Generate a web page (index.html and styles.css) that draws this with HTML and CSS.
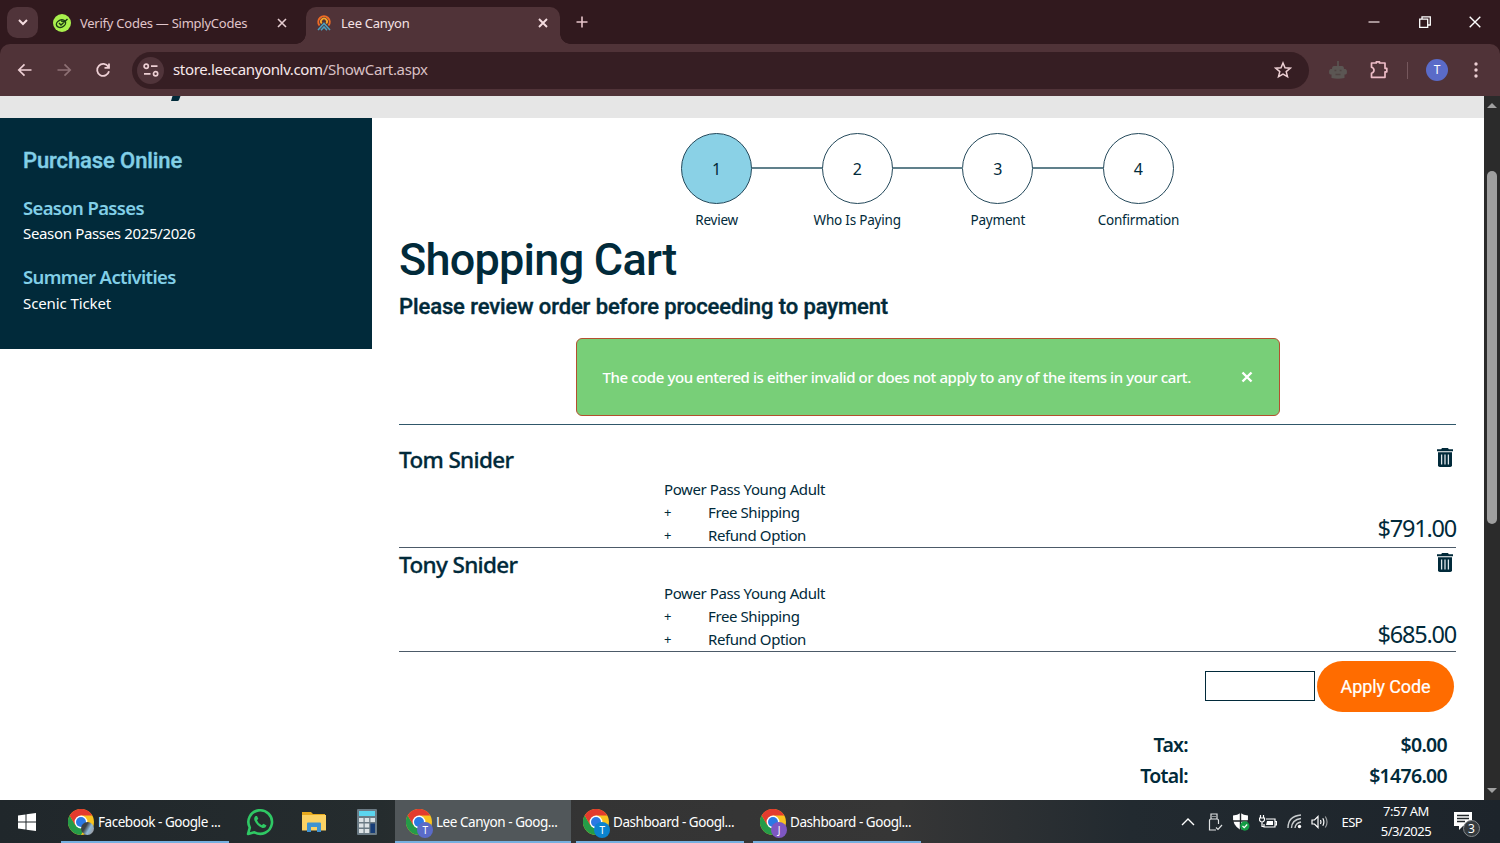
FILE: index.html
```html
<!DOCTYPE html>
<html lang="en">
<head>
<meta charset="UTF-8">
<meta name="viewport" content="width=device-width, initial-scale=1.0">
<title>Lee Canyon</title>
<link rel="stylesheet" href="styles.css">
</head>
<body>

<svg class="defs" width="0" height="0">
<symbol id="chrome" viewBox="0 0 26 26">
<circle cx="13" cy="13" r="13" fill="#f9c31f"/>
<path d="M1.7 6.5A13 13 0 0 0 13 26L18.6 16.2L13 13L7.4 16.2Z" fill="#259b48"/>
<path d="M1.7 6.5A13 13 0 0 1 24.3 6.5H13L7.4 16.2Z" fill="#e33b2e"/>
<circle cx="13" cy="13" r="6.4" fill="#fff"/>
<circle cx="13" cy="13" r="5" fill="#2b79e4"/>
</symbol>
<symbol id="trash" viewBox="0 0 16 19">
<path d="M5 0H11L11.8 1.2H16V3.2H0V1.2H4.2Z" fill="#012a3a"/>
<path d="M1 4.3H15V17.2Q15 19 13.2 19H2.8Q1 19 1 17.2Z" fill="#012a3a"/>
<path d="M4.6 6.5V16.5M8 6.5V16.5M11.4 6.5V16.5" stroke="#dfe6ea" stroke-width="1.3"/>
</symbol>
</svg>

<header class="browser">
<div class="tabs">
<div class="tab-search"><svg width="12" height="12" viewBox="0 0 12 12"><path d="M2 4L6 8L10 4" fill="none" stroke="#f5dde0" stroke-width="2"/></svg></div>
<div class="tab">
<svg width="18" height="18" viewBox="0 0 18 18"><circle cx="9" cy="9" r="9" fill="#a9f04d"/><g fill="none" stroke="#1c3d14" stroke-width="1.4"><ellipse cx="8" cy="9.6" rx="4.8" ry="3.6" transform="rotate(-25 8 9.6)"/><path d="M6 9L8 11L14.5 5M8 7L12.5 7.5"/></g></svg>
<span class="tab-name verify">Verify Codes — SimplyCodes</span>
<svg class="close" width="10" height="10" viewBox="0 0 10 10"><path d="M1 1L9 9M9 1L1 9" stroke="#e6cdd1" stroke-width="1.6"/></svg>
</div>
<div class="tab active">
<svg width="14" height="16" viewBox="0 0 14 16"><g fill="none"><path d="M2.500 10.500A5.700 5.700 0 1 1 11.500 10.500" stroke="#ee6b25" stroke-width="2"/><path d="M4.700 8.500A3 3 0 1 1 9.300 8.500" stroke="#f6a62a" stroke-width="1.800"/><path d="M1 15L7 8.500L13 15M4 15.200L7 12L10 15.200" stroke="#4b9fbd" stroke-width="1.600"/></g></svg>
<span class="tab-name">Lee Canyon</span>
<svg class="close" width="10" height="10" viewBox="0 0 10 10"><path d="M1 1L9 9M9 1L1 9" stroke="#f5dde0" stroke-width="1.9"/></svg>
</div>
<svg class="new-tab" width="12" height="12" viewBox="0 0 12 12"><path d="M6 .5V11.500M.5 6H11.500" stroke="#e6c4ca" stroke-width="1.6"/></svg>
<div class="window-buttons">
<svg width="12" height="12" viewBox="0 0 12 12"><path d="M.5 6H11.500" stroke="#f5e4e6" stroke-width="1.2"/></svg>
<svg width="12" height="12" viewBox="0 0 12 12"><path d="M.7 3.200H8.700V11.300H.7ZM3 3V.8H11.300V9H9" fill="none" stroke="#fff" stroke-width="1.3"/></svg>
<svg width="12" height="12" viewBox="0 0 12 12"><path d="M.7 .7L11.300 11.300M11.300 .7L.7 11.300" stroke="#fff" stroke-width="1.4"/></svg>
</div>
</div>
<div class="toolbar">
<svg width="16" height="16" viewBox="0 0 16 16"><path d="M14.500 8H2M7.500 2.300L1.800 8L7.500 13.700" fill="none" stroke="#edcfd4" stroke-width="1.700"/></svg>
<svg width="16" height="16" viewBox="0 0 16 16"><path d="M1.500 8H14M8.500 2.300L14.200 8L8.500 13.700" fill="none" stroke="#8d7074" stroke-width="1.700"/></svg>
<svg width="16" height="16" viewBox="0 0 16 16"><path d="M13.300 4.800A6 6 0 1 0 14 9.300M14 1.500V5.800H9.500" fill="none" stroke="#edcfd4" stroke-width="1.8"/></svg>
<div class="omnibox">
<div class="site-info"><svg width="16" height="14" viewBox="0 0 16 14"><g fill="none" stroke="#eccfd3" stroke-width="1.700"><circle cx="3.200" cy="3.200" r="2.100"/><path d="M8 3.200H14.500M1 10.800H7.500"/><circle cx="12.600" cy="10.800" r="2.100"/></g></svg></div>
<span class="url">store.leecanyonlv.com<i>/ShowCart.aspx</i></span>
<svg class="star" width="18" height="18" viewBox="0 0 18 18"><path d="M9 2L11 6.800L16.200 7.200L12.200 10.600L13.500 15.700L9 13L4.500 15.700L5.800 10.600L1.800 7.200L7 6.800Z" fill="none" stroke="#eccfd3" stroke-width="1.500"/></svg>
</div>
<svg class="robot" width="18" height="18" viewBox="0 0 18 18"><path d="M8.200 0H9.800V5H13Q15 5 15 8H16.500Q18 8.500 18 11T16.500 13.500H15.500V17Q9 18.500 2.500 17V13.500H1.500Q0 13.500 0 11T1.500 8H3Q3 5 5 5H8.200Z" fill="#5b5653"/><path d="M5.500 9.500H7.300M10.700 9.500H12.500M6.500 13.500H11.500" stroke="#4f4342" stroke-width="1.400"/></svg>
<svg class="puzzle" width="20" height="20" viewBox="0 0 20 20"><path d="M2.500 3H7.300V1.800H10.500V3H16V8.300H17.800V11.800H16V17.300H2.500V13.300Q5 12.500 5 10.300T2.500 7.300Z" fill="none" stroke="#eebdc7" stroke-width="1.700" stroke-linejoin="round"/></svg>
<span class="divider"></span>
<span class="profile">T</span>
<svg class="dots" width="4" height="16" viewBox="0 0 4 16"><g fill="#eccfd3"><circle cx="2" cy="2" r="1.700"/><circle cx="2" cy="8" r="1.700"/><circle cx="2" cy="14" r="1.700"/></g></svg>
</div>
</header>

<div class="page">
<div class="content">
<div class="site-header"><svg width="10" height="6" viewBox="0 0 10 6"><path d="M1.500 0H9.500L8 4Q7.500 5 6.500 5H0Z" fill="#012a3a"/></svg></div>
<div class="columns">
<aside class="sidebar">
<h2>Purchase Online</h2>
<h3 class="passes">Season Passes</h3>
<a class="pass-link">Season Passes 2025/2026</a>
<h3 class="summer">Summer Activities</h3>
<a class="scenic">Scenic Ticket</a>
</aside>
<main class="cart">
<div class="steps">
<div class="step current"><span class="circle">1</span><span class="step-name">Review</span></div>
<div class="step"><span class="circle">2</span><span class="step-name">Who Is Paying</span></div>
<div class="step"><span class="circle">3</span><span class="step-name">Payment</span></div>
<div class="step"><span class="circle">4</span><span class="step-name">Confirmation</span></div>
</div>
<h1>Shopping Cart</h1>
<p class="lead">Please review order before proceeding to payment</p>
<div class="alert">
<span>The code you entered is either invalid or does not apply to any of the items in your cart.</span>
<svg width="12" height="12" viewBox="0 0 12 12"><path d="M1.500 1.500L10.500 10.500M10.500 1.500L1.500 10.500" stroke="#fff" stroke-width="2.400"/></svg>
</div>
<div class="items">
<section class="item">
<div class="item-head"><h4>Tom Snider</h4><svg width="16" height="19"><use href="#trash"/></svg></div>
<div class="item-body">
<ul>
<li>Power Pass Young Adult</li>
<li><b>+</b>Free Shipping</li>
<li><b>+</b>Refund Option</li>
</ul>
<span class="price">$791.00</span>
</div>
</section>
<section class="item second">
<div class="item-head"><h4>Tony Snider</h4><svg width="16" height="19"><use href="#trash"/></svg></div>
<div class="item-body">
<ul>
<li>Power Pass Young Adult</li>
<li><b>+</b>Free Shipping</li>
<li><b>+</b>Refund Option</li>
</ul>
<span class="price">$685.00</span>
</div>
</section>
</div>
<form class="code">
<input type="text" aria-label="Code">
<button type="button">Apply Code</button>
</form>
<div class="totals">
<span>Tax:</span><span>$0.00</span>
<span>Total:</span><span>$1476.00</span>
</div>
</main>
</div>
</div>
<div class="scrollbar"><i class="up"></i><i class="thumb"></i><i class="down"></i></div>
</div>

<footer class="taskbar">
<div class="start"><svg width="18" height="18" viewBox="0 0 18 18"><path d="M0 2.500L7.500 1.400V8.500H0ZM8.500 1.200L18 0V8.500H8.500ZM0 9.500H7.500V16.600L0 15.500ZM8.500 9.500H18V18L8.500 16.800Z" fill="#fff"/></svg></div>
<div class="task facebook">
<div class="app"><svg width="26" height="26"><use href="#chrome"/></svg><span class="badge photo"></span></div>
<span>Facebook - Google ...</span>
</div>
<svg class="whatsapp" width="28" height="28" viewBox="0 0 28 28"><path d="M2 26L3.800 19.600A11.800 11.800 0 1 1 8.400 24.300Z" fill="#252c2e" stroke="#2fc864" stroke-width="2.600" stroke-linejoin="round"/><path d="M9.500 8Q7.500 9.500 8.500 12.500Q11 18 16.500 20Q19.500 20.500 20.500 17.500L17.500 15.700L15.700 17.300Q12 15.500 11 12.300L12.300 10.800L11 8Z" fill="#2fc864"/></svg>
<svg class="folder" width="26" height="22" viewBox="0 0 26 22"><path d="M1 1H10L12 3H24V19H1Z" fill="#e7a91d"/><path d="M1 4H25V19.500H1Z" fill="#fcd264"/><path d="M6 21V12.500Q6 11.500 7 11.500H19Q20 11.500 20 12.500V21H16V16H10V21Z" fill="#3f93d2"/></svg>
<svg class="calc" width="20" height="26" viewBox="0 0 20 26"><rect width="20" height="26" rx="1" fill="#6b7b85"/><path d="M2 2H18V7H2Z" fill="#5bd5ee"/><g fill="#dde3e6"><path d="M2 9H6.500V13H2ZM7.700 9H12.200V13H7.700ZM13.400 9H18V13H13.400ZM2 14.500H6.500V18.500H2ZM7.700 14.500H12.200V18.500H7.700ZM2 20H6.500V24H2ZM7.700 20H12.200V24H7.700Z"/></g><path d="M13.400 14.500H18V24H13.400Z" fill="#173d77"/></svg>
<div class="task open">
<div class="app"><svg width="26" height="26"><use href="#chrome"/></svg><span class="badge">T</span></div>
<span>Lee Canyon - Goog...</span>
</div>
<div class="task">
<div class="app"><svg width="26" height="26"><use href="#chrome"/></svg><span class="badge blue">T</span></div>
<span>Dashboard - Googl...</span>
</div>
<div class="task">
<div class="app"><svg width="26" height="26"><use href="#chrome"/></svg><span class="badge purple">J</span></div>
<span>Dashboard - Googl...</span>
</div>
<div class="tray">
<svg width="14" height="8" viewBox="0 0 14 8"><path d="M1 7L7 1L13 7" fill="none" stroke="#fff" stroke-width="1.400"/></svg>
<svg class="usb" width="15" height="18" viewBox="0 0 15 18"><g fill="none" stroke="#dfe2e3" stroke-width="1.200"><path d="M3 6V1H9V6M5 3V4M7 3V4M10.500 11V7.500Q10.500 6 9 6H3Q1.500 6 1.500 7.500V17H8"/><path d="M8 14.500L10 16.500L14 12"/></g></svg>
<svg class="shield" width="18" height="18" viewBox="0 0 18 18"><path d="M8.500 0Q11.500 2 16 2.500Q17 12 8.500 17Q0 12 1 2.500Q5.500 2 8.500 0Z" fill="#fff"/><path d="M8.500 0V17M0 8H17" stroke="#20262a" stroke-width="1.400"/><circle cx="12.800" cy="13" r="4.700" fill="#149c45"/><path d="M10.500 13L12.200 14.700L15.200 11.500" fill="none" stroke="#fff" stroke-width="1.200"/></svg>
<svg class="battery" width="18" height="14" viewBox="0 0 18 14"><g fill="none" stroke="#fff" stroke-width="1.200"><path d="M7 4H16V12H5V9M16 6.500H17.500V10H16M1.500 0V3M4.500 0V3M.5 3H5.500V5Q5 7 3 7T.5 5ZM3 7V11.500H5"/></g><path d="M8 6H14V10H7Z" fill="#fff"/></svg>
<svg class="wifi" width="15" height="15" viewBox="0 0 15 15"><g fill="none" stroke="#c9cdcf" stroke-width="1.400"><path d="M1 14Q1 2 14 1"/><path d="M4.500 14Q5 5.500 14 4.500"/><path d="M8 14Q8.500 9 14 8"/></g><circle cx="12.500" cy="12.500" r="1.700" fill="#fff"/></svg>
<svg class="sound" width="18" height="14" viewBox="0 0 18 14"><g fill="none" stroke="#fff" stroke-width="1.200"><path d="M1 5V9H3.500L7 12.500V1.500L3.500 5ZM9.500 5Q10.500 7 9.500 9M11.800 3.200Q14 7 11.800 10.800"/><path d="M14.300 1.500Q17.800 7 14.300 12.500" stroke="#9a9d9f"/></g></svg>
<span class="lang">ESP</span>
<div class="clock"><span>7:57 AM</span><span>5/3/2025</span></div>
<div class="notes"><svg width="18" height="19" viewBox="0 0 18 19"><path d="M0 0H18V14H9L5 18V14H0Z" fill="#fff"/><path d="M3 3.500H15M3 6.500H15M3 9.500H11" stroke="#22282c" stroke-width="1.300"/></svg><span>3</span></div>
</div>
</footer>

</body>
</html>
```

FILE: styles.css
```css
* {
box-sizing: border-box;
}

body {
margin: 0;
width: 1500px;
height: 843px;
overflow: hidden;
display: flex;
flex-direction: column;
font-family: "Noto Sans", sans-serif;
color: #012a3a;
background-color: #fff;
}

h1, h2, h3, h4, p, ul {
margin: 0;
padding: 0;
}

svg {
flex: none;
display: block;
}

.defs {
position: absolute;
}

/* browser window */
.browser {
height: 96px;
background-color: #31191e;
}

.tabs {
height: 44px;
display: flex;
align-items: center;
padding: 0 19px 0 7px;
}

.tab-search {
width: 31px;
height: 31px;
border-radius: 10px;
background-color: #50343a;
display: flex;
align-items: center;
justify-content: center;
}

.tab {
display: flex;
align-items: center;
width: 268px;
height: 37px;
padding: 0 19px 5px 15px;
margin-top: 7px;
}

.tab-name {
margin-left: 8px;
font-size: 13px;
line-height: 20px;
color: #e0c5ca;
white-space: nowrap;
letter-spacing: -0.25px;
}

.verify {
margin-left: 9px;
}

.tab .close {
margin-left: auto;
}

.tab.active {
position: relative;
width: 254px;
padding: 0 12px 5px 11px;
border-radius: 10px 10px 0 0;
background-color: #503338;
}

.tab.active::before, .tab.active::after {
content: "";
position: absolute;
bottom: 0;
width: 10px;
height: 10px;
}

.tab.active::before {
left: -10px;
background: radial-gradient(circle at 0 0, transparent 9.5px, #503338 10px);
}

.tab.active::after {
right: -10px;
background: radial-gradient(circle at 100% 0, transparent 9.5px, #503338 10px);
}

.tab.active .tab-name {
margin-left: 10px;
color: #f5e2e5;
}

.new-tab {
margin-left: 16px;
}

.window-buttons {
margin-left: auto;
display: flex;
gap: 38.5px;
}

.toolbar {
height: 52px;
display: flex;
align-items: center;
padding: 0 22px 0 17px;
border-radius: 10px 10px 0 0;
background-color: #503338;
}

.toolbar > svg + svg {
margin-left: 23px;
}

.omnibox {
width: 1177px;
height: 37px;
margin-left: 21px;
padding: 0 17px 0 5px;
display: flex;
align-items: center;
border-radius: 19px;
background-color: #361e23;
}

.site-info {
width: 27px;
height: 27px;
border-radius: 50%;
background-color: #50343a;
display: flex;
align-items: center;
justify-content: center;
}

.url {
margin-left: 9px;
padding-bottom: 2px;
font-size: 15px;
letter-spacing: -0.34px;
color: #f7e8ea;
}

.url i {
font-style: normal;
color: #d9c0c4;
}

.star {
margin-left: auto;
}

.toolbar .robot {
margin-left: 20px;
}

.toolbar .puzzle {
margin-left: 22px;
}

.divider {
width: 1px;
height: 17px;
margin-left: 18px;
background-color: #76585d;
}

.profile {
width: 22px;
height: 22px;
margin-left: 18px;
border-radius: 50%;
background-color: #5a6bc8;
color: #fff;
font-size: 12px;
line-height: 22px;
text-align: center;
}

.dots {
margin-left: 26px;
}

/* store page */
.page {
height: 704px;
display: flex;
}

.content {
width: 1484px;
}

.site-header {
height: 22px;
padding-left: 171px;
background-color: #e6e6e6;
}

.columns {
display: flex;
align-items: flex-start;
}

.sidebar {
width: 372px;
height: 231px;
padding: 28px 23px;
background-color: #012a3a;
color: #fff;
}

.sidebar h2 {
font-family: Roboto, sans-serif;
font-size: 22px;
font-weight: 500;
line-height: 30px;
letter-spacing: -0.1px;
color: #82cfe7;
-webkit-text-stroke: 0.4px #82cfe7;
}

.sidebar h3 {
font-size: 18.5px;
font-weight: 600;
line-height: 26px;
letter-spacing: -0.65px;
color: #82cfe7;
}

.sidebar a {
display: block;
font-size: 15px;
line-height: 24px;
}

.sidebar .pass-link {
letter-spacing: -0.34px;
}

.sidebar .scenic {
margin-top: 1px;
letter-spacing: -0.1px;
}

.sidebar .passes {
margin-top: 19px;
}

.sidebar .summer {
margin-top: 19px;
}

.cart {
width: 1112px;
padding: 15px 28px 0 27px;
}

.steps {
display: flex;
justify-content: center;
}

.step {
position: relative;
width: 140.6px;
display: flex;
flex-direction: column;
align-items: center;
}

.circle {
width: 71px;
height: 71px;
border: 1px solid #23485a;
border-radius: 50%;
font-size: 16px;
line-height: 70px;
text-align: center;
}

.current .circle {
background-color: #8ad1e6;
}

/* connector to the previous step */
.step + .step::before {
content: "";
position: absolute;
top: 34px;
left: -35px;
width: 70px;
height: 2px;
background-color: #60808b;
}

.step-name {
margin-top: 6px;
font-size: 13.5px;
line-height: 20px;
letter-spacing: -0.2px;
white-space: nowrap;
}

.cart h1 {
margin-top: 3px;
font-family: Roboto, sans-serif;
font-size: 45px;
font-weight: 500;
line-height: 54px;
letter-spacing: -0.75px;
}

.lead {
margin-top: 5px;
font-family: Roboto, sans-serif;
font-size: 22px;
font-weight: 500;
line-height: 30px;
letter-spacing: -0.1px;
-webkit-text-stroke: 0.4px #012a3a;
}

.alert {
width: 704px;
height: 78px;
margin: 16px auto 8px;
padding: 0 26px;
display: flex;
align-items: center;
justify-content: space-between;
border: 1px solid #b4502f;
border-radius: 6px;
background-color: #78cf78;
color: #fff;
font-size: 15px;
font-weight: 500;
letter-spacing: -0.42px;
white-space: nowrap;
}

.items {
border-top: 1px solid #30576a;
padding-top: 18px;
}

.item {
border-bottom: 1px solid #4c5a68;
}

.item-head {
height: 35px;
display: flex;
justify-content: space-between;
padding-right: 3px;
}

.item-head svg {
margin-top: 5px;
}

.item h4 {
font-size: 22.5px;
font-weight: 500;
line-height: 34px;
letter-spacing: -0.65px;
-webkit-text-stroke: 0.3px #012a3a;
}

.item-body {
display: flex;
justify-content: space-between;
align-items: flex-end;
padding-left: 265px;
}

.item ul {
list-style: none;
}

.item li {
display: flex;
font-size: 15px;
line-height: 23px;
letter-spacing: -0.4px;
}

.item li b {
width: 44px;
font-size: 13px;
font-weight: 400;
}

.price {
font-size: 23.5px;
line-height: 37px;
letter-spacing: -1.2px;
}

.second .item-head {
height: 34px;
}

.second .price {
line-height: 33px;
}

.code {
display: flex;
justify-content: flex-end;
align-items: center;
gap: 2px;
margin-top: 9px;
padding-right: 2px;
}

.code input {
width: 110px;
height: 30px;
margin-bottom: 1px;
border: 1px solid #012a3a;
background-color: #fff;
}

.code button {
width: 137px;
height: 51px;
padding: 0;
border: none;
border-radius: 26px;
background-color: #ff6c00;
color: #fff;
font-family: Roboto, sans-serif;
font-size: 18px;
letter-spacing: -0.1px;
-webkit-text-stroke: 0.2px #fff;
}

.totals {
display: grid;
grid-template-columns: 160px 259px;
justify-content: end;
margin-top: 17px;
padding-right: 9px;
font-size: 19.5px;
font-weight: 600;
line-height: 31px;
letter-spacing: -0.7px;
text-align: right;
}

.scrollbar {
width: 16px;
display: flex;
flex-direction: column;
align-items: center;
padding: 7px 0 7px;
background-color: #2b2b2b;
}

.up, .down {
border: 5px solid transparent;
border-top: none;
border-bottom: 5px solid #a0a0a0;
}

.down {
margin-top: auto;
border-top: 5px solid #a0a0a0;
border-bottom: none;
}

.thumb {
width: 10px;
height: 353px;
margin-top: 63px;
border-radius: 5px;
background-color: #9f9f9f;
}

/* windows taskbar */
.taskbar {
height: 43px;
display: flex;
align-items: center;
background: linear-gradient(to right, #20272b 0, #252c2e 380px, #343434 580px, #363636 900px, #222a30 1130px, #1d242b 1500px);
color: #fff;
}

.start {
width: 61px;
padding-left: 18px;
}

.task {
width: 168px;
height: 43px;
margin-right: 9px;
padding: 2px 0 0 7px;
display: flex;
align-items: center;
gap: 4px;
border-bottom: 2px solid #76b0e0;
font-size: 13.5px;
letter-spacing: -0.45px;
white-space: nowrap;
}

.app {
position: relative;
width: 26px;
height: 26px;
}

.badge {
position: absolute;
left: 11px;
top: 13px;
width: 16px;
height: 16px;
border-radius: 50%;
background-color: #5a6bc8;
font-size: 10px;
line-height: 16px;
text-align: center;
}

.blue {
background-color: #0b83cf;
}

.purple {
background-color: #7e57c2;
}

.photo {
width: 13px;
height: 13px;
left: 13px;
background: linear-gradient(120deg, #3c4244 35%, #8fb8d8 60%, #a08e88);
}

.facebook {
margin-right: 16.5px;
}

.open {
width: 176px;
margin-right: 5px;
padding-left: 11px;
background-color: #51575a;
}

.folder {
margin-left: 27px;
}

.calc {
margin: 0 18px 0 30.5px;
}

.tray {
margin-left: auto;
padding-right: 18px;
display: flex;
align-items: center;
}

.usb {
margin-left: 13px;
}

.shield {
margin-left: 9px;
}

.battery {
margin-left: 9px;
}

.wifi {
margin-left: 10px;
}

.sound {
margin-left: 9px;
}

.lang {
margin-left: 13px;
font-size: 13px;
letter-spacing: -0.6px;
}

.clock {
width: 56px;
margin-left: 16px;
display: flex;
flex-direction: column;
align-items: center;
padding-bottom: 2px;
font-size: 13px;
line-height: 20px;
letter-spacing: -0.5px;
white-space: nowrap;
}

.notes {
position: relative;
width: 28px;
margin-left: 20px;
}

.notes span {
position: absolute;
left: 9px;
top: 8px;
width: 17px;
height: 17px;
border: 1px solid #85898c;
border-radius: 50%;
background-color: #343a3e;
font-size: 12px;
line-height: 15px;
text-align: center;
}
```
